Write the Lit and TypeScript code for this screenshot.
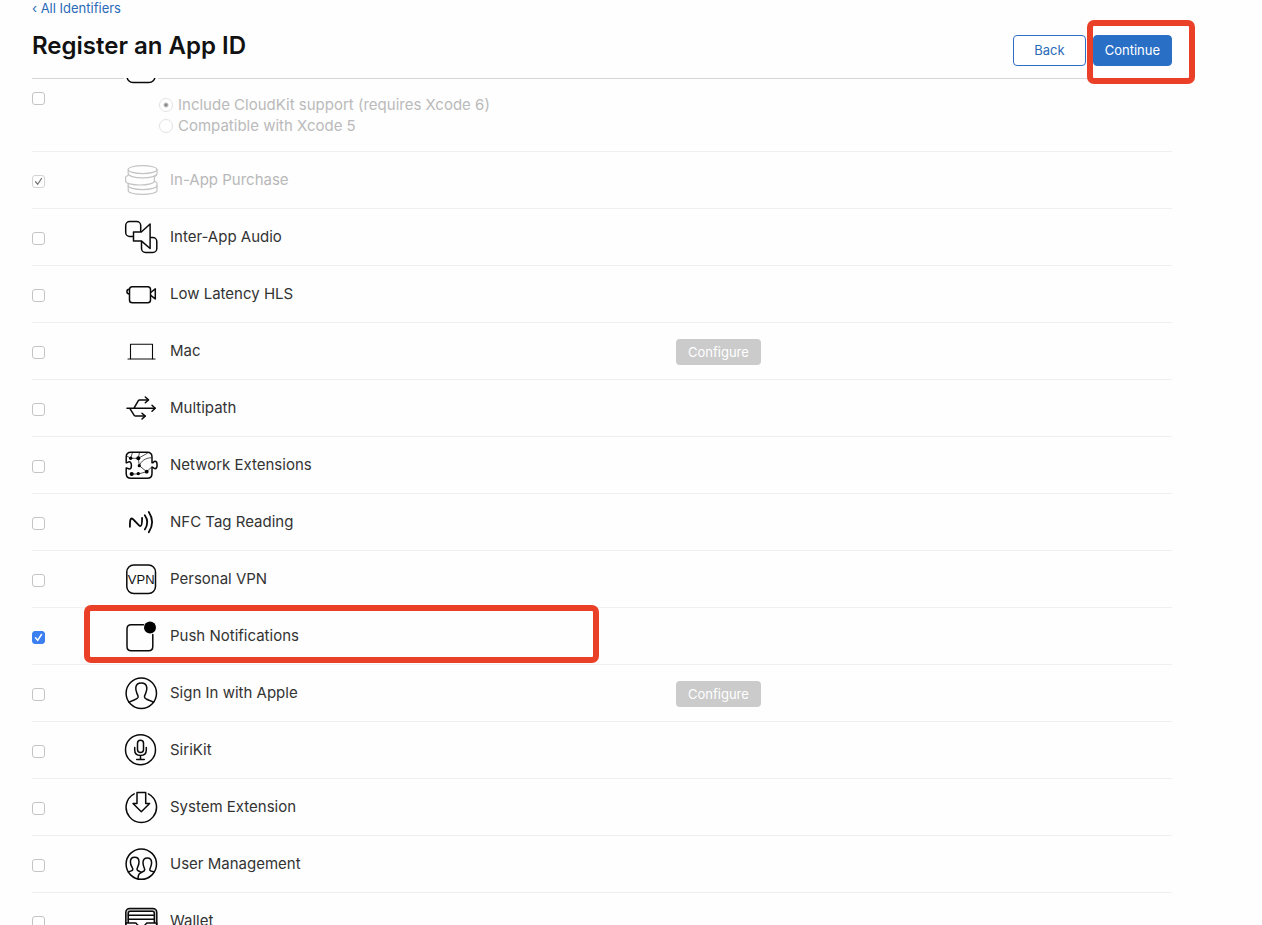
import { LitElement, html, css, svg, nothing } from "lit";
import type { SVGTemplateResult } from "lit";
import { customElement } from "lit/decorators.js";
import { classMap } from "lit/directives/class-map.js";

interface Capability {
  id: string;
  name: string;
  icon: SVGTemplateResult;
  checked?: boolean;
  disabled?: boolean;
  configure?: boolean;
  marked?: boolean;
}

const icons = {
  icloud: svg`<rect x="3" y="3" width="28" height="29.5" rx="6" />`,
  purchase: svg`
    <ellipse cx="18.6" cy="6.6" rx="14.4" ry="4" />
    <path d="M4.2 6.6v4.2c0 2 6 4 14.4 4s14.4-2 14.4-4V6.6" />
    <path d="M4.2 12.4c-1.700.6-2.600 1.300-2.600 2v3.600c0 2.200 6.400 4 14.400 4s14.400-1.800 14.400-4v-4" />
    <path d="M31 13.500c.8-.6 1.500-1.200 1.500-2" />
    <path d="M4.200 20.500v2.300c0 2 6 3.800 14.400 3.800s14.400-1.800 14.400-3.800v-2.600c0-.8-1-1.500-2.600-2" />
    <path d="M4.200 22.800v4.600c0 2.200 6 4 14.400 4s14.400-1.800 14.400-4v-4.600" />`,
  audio: svg`
    <rect x="1.700" y="1.600" width="15" height="14.800" rx="4" />
    <rect x="17.500" y="17.500" width="15.300" height="15" rx="4" />
    <path class="solid" d="M9.500 12h7.800l8.800-8v24.500l-8.800-7.600H9.500z" />`,
  video: svg`
    <rect x="5.500" y="9.700" width="21" height="16" rx="2.800" />
    <path d="M5.300 12.200c-1.600 0-2.400.8-2.400 2.300s.8 2.400 2.400 2.400M26.700 15.500l4.600-3.600v10l-4.600-3.600" />`,
  mac: svg`
    <g class="thin"><path d="M6.500 24.700V10.300h22v14.400" /><path d="M4 25h27" /></g>`,
  multipath: svg`
    <path d="M3 17.300h28M10 17.200l4.200-7.400q.5-.9 1.500-.9H24M5.800 17.300l4.400 7q.5.800 1.500.8H21" />
    <path d="M28 14.300l3.200 3-3.200 3M21.300 6l3.200 2.900-3.200 2.900M18 22.200l3.200 2.900-3.200 2.900" />`,
  network: svg`
    <path d="M7 4.300h16.200q4.800 0 4.800 4.800v5.700c1.500.4 1.300-1.500 3-1.500 1.400 0 2.100 1.500 2.100 3.700s-.7 3.700-2.100 3.700c-1.700 0-1.500-1.900-3-1.500v6.300q0 4.800-4.800 4.800H7q-4.800 0-4.800-4.800v-5.500c1.500-.4 1.500 1 3 1 1.400 0 2.200-1.500 2.200-3.600s-.8-3.700-2.200-3.700c-1.500 0-1.500 1.400-3 1V9.100q0-4.800 4.800-4.800z" />
    <path class="hair" d="M2.800 8l4 2.300h7.500l9-5M14.300 10.300l1.200-6M6.700 10.300l1.800-6M14.300 10.300l1 7.400 7.400 6M15.300 17.700c2-5 6-7.700 12-8M7.700 26h6.600l8.400-2.300 5.300-5" />
    <g class="dot"><circle cx="6.700" cy="10.300" r="1.700" /><circle cx="14.300" cy="10.300" r="2" /><circle cx="15.300" cy="17.700" r="1.600" /><circle cx="7.700" cy="26" r="2.100" /><circle cx="14.300" cy="25.600" r="1.700" /><circle cx="22.700" cy="23.700" r="1.900" /></g>`,
  nfc: svg`
    <g class="bold"><path d="M5.900 21.800c0-4 0-8.300 1.900-8.300 1.700 0 6.700 7.600 8.600 7.600 1.700 0 1.700-4 1.700-8.300" />
    <path d="M20.800 10.200c3 4.300 3 9.800 0 14.200M24.800 7c4.300 6.500 4.300 13.700 0 20.300" /></g>`,
  vpn: svg`
    <rect x="2.800" y="3" width="28.700" height="28.500" rx="7" />
    <text x="17.200" y="22" text-anchor="middle">VPN</text>`,
  push: svg`
    <path d="M19.500 5.700H7.200q-4.200 0-4.200 4.200v17.600q0 4.200 4.200 4.200h17.400q4.200 0 4.200-4.200V15.500" />
    <circle class="dot" cx="26" cy="8.400" r="6" />`,
  person: svg`
    <circle cx="17.300" cy="17.300" r="15.200" />
    <path d="M5 26.400c3-2.200 8.200-2.700 9-4.900.5-1.600-.4-2.400-1-3.900-.8-2-1.500-3.800-1.200-6 .3-2.900 2.500-4.700 5.500-4.700s5.200 1.800 5.500 4.700c.3 2.200-.4 4-1.200 6-.6 1.500-1.500 2.300-1 3.900.8 2.200 6 2.700 9 4.900" />`,
  siri: svg`
    <circle cx="16.500" cy="16.700" r="15" />
    <rect x="13.500" y="7.200" width="6" height="12.400" rx="3" />
    <path d="M10.700 14.500v2.600c0 3.300 2.300 5.500 5.800 5.500s5.800-2.200 5.800-5.500v-2.600M16.500 22.600v3.800M12.700 26.400h7.600" />`,
  system: svg`
    <path d="M10.200 3.800a15.200 15.200 0 1 0 14.200 0" />
    <path d="M13 2.500h8.700v11h3.900l-8.300 8.300L9 13.500h4z" />`,
  users: svg`
    <circle cx="17.300" cy="17.100" r="15.200" />
    <path d="M4.300 24.900c2-.8 4.500-.8 4.500-2.700 0-1.500-2.400-3.400-2.400-7.300 0-3 1.700-4.700 4.300-4.700s4.300 1.700 4.300 4.700c0 3.900-2 5.800-2 7.300 0 1.500 2 2 4 2.800M14 31.800c.2-4.500 1.200-5.500 4.200-6.800 1.800-.7 2.500-1 2.500-2.300 0-1.400-1.700-3.300-1.700-7 0-3.100 1.700-4.800 4.300-4.800s4.300 1.700 4.300 4.800c0 3.700-1.800 5.600-1.800 7 0 1.300 1.700 1.600 4 2" />`,
  wallet: svg`
    <rect class="tint" x="1.800" y="4.400" width="31" height="27" rx="4" />
    <rect class="solid" x="4.300" y="7.200" width="26" height="22" rx="2" />
    <path d="M4.300 11.200h26M4.300 15.200h26" />
    <path class="solid" d="M2 19h9.500c1.500 0 1.500 3.500 5.800 3.500s4.300-3.500 5.800-3.500h9.500v12H2z" />`,
};

const capabilities: Capability[] = [
  { id: "in-app-purchase", name: "In-App Purchase", icon: icons.purchase, checked: true, disabled: true },
  { id: "inter-app-audio", name: "Inter-App Audio", icon: icons.audio },
  { id: "low-latency-hls", name: "Low Latency HLS", icon: icons.video },
  { id: "mac", name: "Mac", icon: icons.mac, configure: true },
  { id: "multipath", name: "Multipath", icon: icons.multipath },
  { id: "network-extensions", name: "Network Extensions", icon: icons.network },
  { id: "nfc", name: "NFC Tag Reading", icon: icons.nfc },
  { id: "personal-vpn", name: "Personal VPN", icon: icons.vpn },
  { id: "push", name: "Push Notifications", icon: icons.push, checked: true, marked: true },
  { id: "sign-in", name: "Sign In with Apple", icon: icons.person, configure: true },
  { id: "sirikit", name: "SiriKit", icon: icons.siri },
  { id: "system-extension", name: "System Extension", icon: icons.system },
  { id: "user-management", name: "User Management", icon: icons.users },
  { id: "wallet", name: "Wallet", icon: icons.wallet },
];

@customElement("app-root")
export class AppRoot extends LitElement {
  static styles = css`
    :host {
      display: flex;
      flex-direction: column;
      height: 100vh;
      overflow: hidden;
      box-sizing: border-box;
      padding: 0 90px 0 32px;
      background: #fefefe;
      color: #333;
      font-family: Inter, "Liberation Sans", sans-serif;
      font-size: 15px;
      line-height: 20px;
    }
    * {
      box-sizing: border-box;
    }
    .header {
      display: flex;
      justify-content: space-between;
      align-items: flex-end;
      flex: none;
      border-bottom: 1px solid #d6d6d6;
    }
    .heading {
      padding-bottom: 16px;
    }
    .back-link {
      display: block;
      font-size: 13px;
      line-height: 16px;
      color: #2a6ab8;
      text-decoration: none;
    }
    .title {
      margin: 14px 0 0;
      font-size: 24px;
      line-height: 32px;
      font-weight: 600;
      color: #111;
    }
    .actions {
      display: flex;
      gap: 7px;
      padding-bottom: 12px;
    }
    .action {
      position: relative;
    }
    .button {
      display: block;
      height: 31px;
      padding: 0 11px 2px;
      border: 1px solid #2d6fc4;
      border-radius: 4px;
      background: #fff;
      color: #2a6ab8;
      font: 400 13px/16px Inter, "Liberation Sans", sans-serif;
    }
    .wide {
      padding: 0 20px 2px;
    }
    .primary {
      background: #2a6fc6;
      color: #fff;
    }
    .configure {
      height: 26px;
      margin-top: 2px;
      padding: 0 12px 1px;
      border: 0;
      background: #cbcbcb;
      color: #fff;
      justify-self: start;
    }
    .mark {
      position: absolute;
      border: 6px solid #ea4027;
      border-radius: 7px;
      pointer-events: none;
    }
    .mark-action {
      inset: -15px -23px -18px -6px;
    }
    .mark-row {
      top: -3px;
      bottom: 1px;
      left: 52px;
      width: 515px;
    }
    .list {
      flex: 1;
      min-height: 0;
      margin: -1px 0 0;
      padding: 0;
      list-style: none;
      overflow: hidden;
    }
    .row {
      position: relative;
      display: grid;
      grid-template-columns: 82px 36px minmax(0, 1fr) minmax(0, 1fr);
      column-gap: 10px;
      align-items: center;
      height: 57px;
      border-bottom: 1px solid #efefef;
    }
    .row-cloud {
      height: 74px;
      align-items: start;
    }
    .row-cloud .icon {
      margin-top: -28px;
      background: #fefefe;
    }
    .row-cloud .check {
      margin-top: 14px;
    }
    .check,
    .radio {
      appearance: none;
      flex: none;
      width: 13px;
      height: 13px;
      margin: 2px 0 0;
      border: 1px solid #c4c4c4;
      border-radius: 3px;
      background: #fff center / 11px 11px no-repeat;
    }
    .check:checked {
      border-color: #3b7ff0;
      background-color: #3b7ff0;
      background-image: url("data:image/svg+xml,%3Csvg xmlns='http://www.w3.org/2000/svg' viewBox='0 0 11 11'%3E%3Cpath d='M2.500 5.800l2.200 2.500L8.500 2.500' fill='none' stroke='white' stroke-width='1.500' stroke-linecap='round'/%3E%3C/svg%3E");
    }
    .check:checked:disabled {
      border-color: #d4d4d4;
      background-color: #fff;
      background-image: url("data:image/svg+xml,%3Csvg xmlns='http://www.w3.org/2000/svg' viewBox='0 0 11 11'%3E%3Cpath d='M2.500 5.800l2.200 2.500L8.500 2.500' fill='none' stroke='%23777' stroke-width='1.300' stroke-linecap='round'/%3E%3C/svg%3E");
    }
    .radio {
      width: 14px;
      height: 14px;
      margin: 0;
      border-color: #e2e2e2;
      border-radius: 50%;
    }
    .radio:checked {
      background: radial-gradient(circle, #8a8a8a 1px, #fff 3px);
    }
    .options {
      grid-column: 3 / -1;
      display: grid;
      gap: 1px;
      margin: 17px 0 0 -11px;
      padding: 0;
      border: 0;
      min-width: 0;
    }
    .option {
      display: flex;
      align-items: center;
      gap: 5px;
      color: #bababa;
    }
    .icon {
      display: block;
      width: 34px;
      height: 34px;
      fill: none;
      stroke: #0a0a0a;
      stroke-width: 1.5;
      stroke-linejoin: round;
      stroke-linecap: round;
    }
    .icon .solid {
      fill: #fefefe;
    }
    .icon .thin {
      stroke-width: 1.1;
    }
    .icon .hair {
      stroke-width: 0.7;
    }
    .icon .bold {
      stroke-width: 1.8;
    }
    .icon .dot {
      fill: #000;
      stroke: none;
    }
    .icon .tint {
      fill: #c8c8c8;
    }
    .icon text {
      fill: #111;
      stroke: none;
      font: 13px "Liberation Sans", sans-serif;
    }
    .disabled .icon {
      stroke: #c4c4c4;
      stroke-width: 1.2;
    }
    .disabled .name {
      color: #b8b8b8;
    }
  `;

  private renderRow(c: Capability) {
    return html`
      <li class=${classMap({ row: true, disabled: !!c.disabled })}>
        <input class="check" type="checkbox" id=${c.id} ?checked=${c.checked} ?disabled=${c.disabled} />
        <svg class="icon" viewBox="0 0 34 34" aria-hidden="true">${c.icon}</svg>
        <label class="name" for=${c.id}>${c.name}</label>
        ${c.configure ? html`<button class="button configure" type="button" disabled>Configure</button>` : nothing}
        ${c.marked ? html`<div class="mark mark-row"></div>` : nothing}
      </li>
    `;
  }

  render() {
    return html`
      <header class="header">
        <div class="heading">
          <a class="back-link" href="#identifiers">‹ All Identifiers</a>
          <h1 class="title">Register an App ID</h1>
        </div>
        <div class="actions">
          <button class="button wide" type="button">Back</button>
          <div class="action">
            <button class="button primary" type="button">Continue</button>
            <div class="mark mark-action"></div>
          </div>
        </div>
      </header>
      <ul class="list">
        <li class="row row-cloud">
          <input class="check" type="checkbox" aria-label="iCloud" />
          <svg class="icon" viewBox="0 0 34 34" aria-hidden="true">${icons.icloud}</svg>
          <fieldset class="options">
            <label class="option">
              <input class="radio" type="radio" name="cloud" checked disabled />
              <span>Include CloudKit support (requires Xcode 6)</span>
            </label>
            <label class="option">
              <input class="radio" type="radio" name="cloud" disabled />
              <span>Compatible with Xcode 5</span>
            </label>
          </fieldset>
        </li>
        ${capabilities.map((c) => this.renderRow(c))}
      </ul>
    `;
  }
}
